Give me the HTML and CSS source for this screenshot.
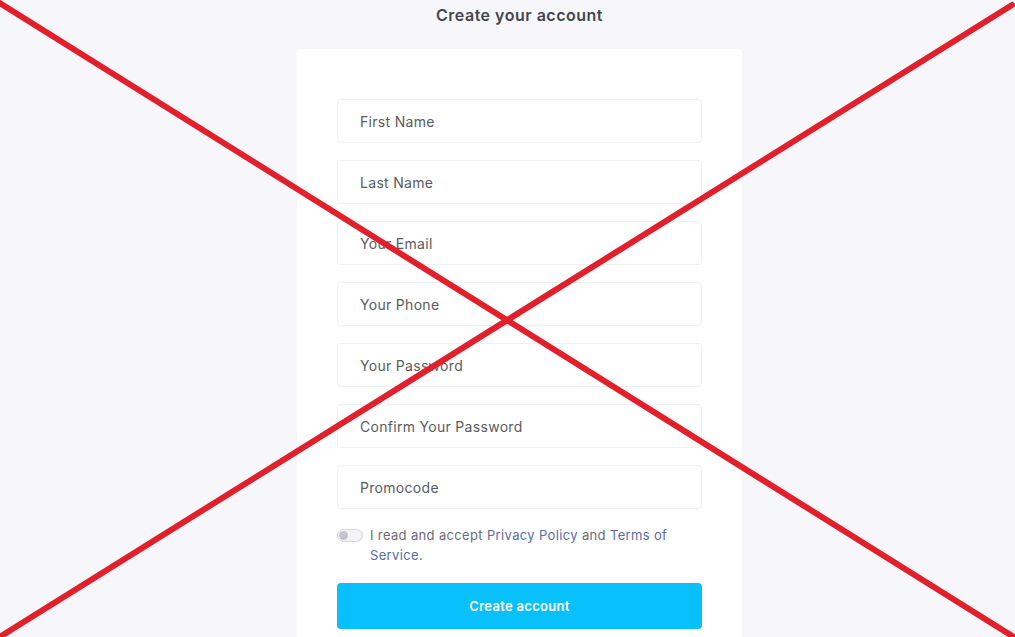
FILE: index.html
```html
<!DOCTYPE html>
<html lang="en">
  <head>
    <meta charset="UTF-8" />
    <meta name="viewport" content="width=device-width, initial-scale=1.0" />
    <title>Create your account</title>
    <link rel="stylesheet" href="styles.css">
  </head>
  <body>
    <h3 class="title">Create your account</h3>
    <div class="card">
      <form class="signup">
        <input type="text" class="field" placeholder="First Name" />
        <input type="text" class="field" placeholder="Last Name" />
        <input type="email" class="field" placeholder="Your Email" />
        <input type="tel" class="field" placeholder="Your Phone" />
        <input type="password" class="field" placeholder="Your Password" />
        <input type="password" class="field" placeholder="Confirm Your Password" />
        <input type="text" class="field" placeholder="Promocode" />

        <label class="terms">
          <span class="toggle"><span class="knob"></span></span>
          <span class="terms-text">I read and accept <a href="#">Privacy Policy</a> and <a href="#">Terms of Service</a>.</span>
        </label>

        <button type="submit" class="submit">Create account</button>
      </form>
    </div>

    <svg class="cross" width="1015" height="637" viewBox="0 0 1015 637">
      <line x1="-2" y1="2" x2="1017" y2="639" />
      <line x1="1012" y1="5" x2="-2" y2="638" />
    </svg>
  </body>
</html>
```

FILE: styles.css
```css
body {
  font-family: Inter, "Open Sans", sans-serif;
  margin: 0;
  padding-left: 24px;
  background-color: #f7f7fb;
  color: #444;
}

.title {
  margin: 0;
  padding-top: 5px;
  height: 44px;
  line-height: 20px;
  font-size: 16px;
  font-weight: 600;
  letter-spacing: 0.5px;
  text-align: center;
  color: #45464d;
}

.card {
  width: 365px;
  margin: 0 auto;
  padding: 50px 40px 40px;
  background-color: #fff;
  border-radius: 4px;
}

.signup {
  display: flex;
  flex-direction: column;
  gap: 17px;
}

.field {
  height: 44px;
  padding: 0 22px;
  border: 1px solid #eef0f3;
  border-radius: 4px;
  font-family: inherit;
  font-size: 14px;
  letter-spacing: 0.3px;
  color: #555;
  box-sizing: border-box;
  width: 100%;
}

.field::placeholder {
  color: #5a5b60;
}

.terms {
  display: flex;
  align-items: flex-start;
  gap: 7px;
  margin-top: -1px;
  font-size: 13px;
  letter-spacing: 0.35px;
  line-height: 20px;
  color: #6b6c72;
}

.toggle {
  flex: none;
  width: 24px;
  height: 11px;
  margin-top: 4px;
  border: 1px solid #d5d6da;
  border-radius: 7px;
  background-color: #f4f4f6;
  position: relative;
}

.knob {
  position: absolute;
  left: 1px;
  top: 1px;
  width: 9px;
  height: 9px;
  border-radius: 50%;
  background-color: #c4c5ca;
}

.terms-text {
  width: 310px;
}

.terms a {
  color: #5b6aa4;
  text-decoration: none;
}

.submit {
  height: 46px;
  margin-top: 1px;
  border: none;
  border-radius: 4px;
  background-color: #08c0fb;
  color: #fff;
  font-family: inherit;
  font-size: 13px;
  font-weight: 600;
  letter-spacing: 0.3px;
  cursor: pointer;
}

.cross {
  position: fixed;
  left: 0;
  top: 0;
  pointer-events: none;
}

.cross line {
  stroke: #e1202b;
  stroke-width: 6;
  stroke-linecap: round;
}
```
